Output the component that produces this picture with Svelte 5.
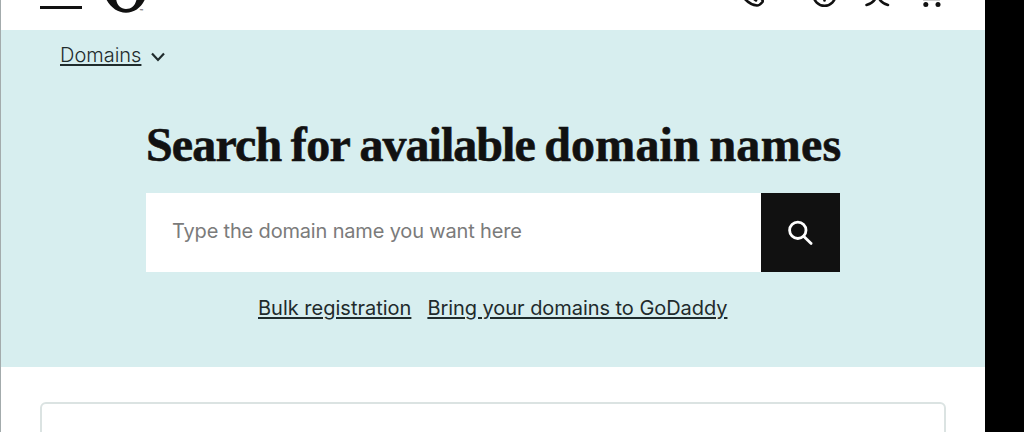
<script>
	let query = '';
	const links = ['Bulk registration', 'Bring your domains to GoDaddy'];
	const title = [
		{ word: 'Search', spacing: -0.85 },
		{ word: 'for', spacing: -0.7 },
		{ word: 'available', spacing: -0.98 },
		{ word: 'domain', spacing: 0.15 },
		{ word: 'names', spacing: 0.3 }
	];
</script>

<div class="screen">
	<div class="page">
		<header>
			<div class="menu"></div>
			<svg class="logo" width="48" height="30" viewBox="0 0 48 30">
				<path d="M2 -3 C7 7 14 12.7 23 12.7 C32 12.7 39 7 43 -3 L34 -3 C33 5 29 9 23 9 C17 9 13 4 13 -3 Z" fill="#111" />
				<text x="36.5" y="13.5" font-size="6">™</text>
			</svg>
			<svg class="icons" width="220" height="30" viewBox="735 0 220 30">
				<g fill="none" stroke="#111" stroke-width="2.6" stroke-linecap="round">
					<path d="M744 -2 Q750 5 757 5.5 Q759.5 5.5 762.5 2 Q763.5 0 760 -2 M754 -1 L756 0.5" />
					<circle cx="824.5" cy="-5.2" r="11" />
					<path d="M824.5 -3 V0.5" />
					<path d="M866.5 5 Q874 3 876 -3 M888 5 Q880.5 3 878.5 -3" />
				</g>
				<path d="M923 0 H940" stroke="#999" stroke-width="1" />
				<circle cx="925.8" cy="4.5" r="2.5" fill="#111" />
				<circle cx="938" cy="4.5" r="2.5" fill="#111" />
			</svg>
		</header>
		<section class="hero">
			<nav>
				<a href="#domains">Domains</a>
				<svg width="16" height="10" viewBox="0 0 16 10"><path d="M2 1.5 L8 8 L14 1.5" fill="none" stroke="#1f2b2c" stroke-width="2.2" /></svg>
			</nav>
			<h1>
				{#each title as part}
					<span style="letter-spacing: {part.spacing}px">{part.word}</span>{' '}
				{/each}
			</h1>
			<form on:submit|preventDefault>
				<input bind:value={query} placeholder="Type the domain name you want here" />
				<button aria-label="Search">
					<svg width="26" height="26" viewBox="0 0 26 26">
						<g fill="none" stroke="#fff" stroke-width="2.8" stroke-linecap="round">
							<circle cx="9.8" cy="10.3" r="8.2" />
							<path d="M15.9 16.4 L23.1 23.6" />
						</g>
					</svg>
				</button>
			</form>
			<div class="links">
				{#each links as link}
					<a href="#link">{link}</a>
				{/each}
			</div>
		</section>
		<div class="card"></div>
	</div>
</div>

<style>
	:global(body) {
		background: #000;
		overflow: hidden;
	}
	.screen {
		height: 432px;
		overflow: hidden;
		font-family: Inter, sans-serif;
		color: #1f2b2c;
	}
	.page {
		box-sizing: border-box;
		width: 985px;
		height: 432px;
		background: #fff;
		border-left: 1px solid #a3abac;
		overflow: hidden;
	}
	header {
		display: flex;
		height: 30px;
	}
	.menu {
		width: 42px;
		height: 3px;
		margin: 6px 0 0 39px;
		background: #111;
	}
	.logo {
		margin-left: 21px;
	}
	.icons {
		margin-left: 584px;
	}
	.hero {
		box-sizing: border-box;
		height: 337px;
		background: #d7eeef;
		overflow: hidden;
	}
	nav {
		display: flex;
		align-items: center;
		gap: 9px;
		height: 26px;
		margin: 12px 0 0 59px;
		font-size: 20px;
		font-weight: 300;
	}
	nav svg {
		margin-top: 3px;
	}
	a {
		color: inherit;
		white-space: nowrap;
		text-decoration-thickness: 1.5px;
		text-underline-offset: 2px;
	}
	h1 {
		width: 720px;
		height: 56px;
		margin: 49px 0 0 145px;
		font: bold 48px/56px "Liberation Serif", serif;
		word-spacing: -2.5px;
		-webkit-text-stroke: 0.6px #111;
		white-space: nowrap;
		color: #111;
	}
	form {
		display: flex;
		width: 694px;
		height: 79px;
		margin: 20px 0 0 145px;
	}
	input {
		flex: 1;
		border: 0;
		padding: 0 26px 3px;
		background: #fff;
		font: 20px Inter, sans-serif;
		letter-spacing: -0.17px;
		outline: none;
	}
	input::placeholder {
		color: #7b7b7b;
	}
	button {
		display: flex;
		align-items: center;
		justify-content: center;
		width: 79px;
		border: 0;
		padding: 0;
		background: #111;
	}
	.links {
		display: flex;
		gap: 16px;
		margin: 23px 0 0 257px;
		font-size: 20px;
		line-height: 26px;
	}
	.links a:last-child {
		letter-spacing: -0.05px;
	}
	.card {
		box-sizing: border-box;
		width: 906px;
		height: 60px;
		margin: 35px 0 0 39px;
		border: 2px solid #dbe3e2;
		border-radius: 6px;
	}
</style>
